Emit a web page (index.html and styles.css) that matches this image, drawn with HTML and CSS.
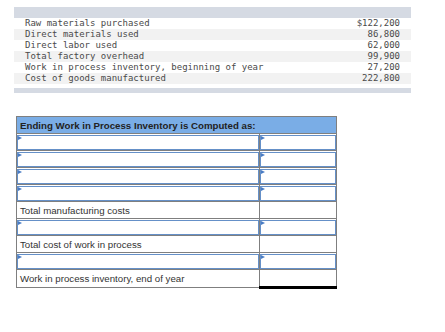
FILE: index.html
```html
<!DOCTYPE html>
<html lang="en">
<head>
    <meta charset="UTF-8">
    <title>Work in Process Inventory</title>
    <link rel="stylesheet" href="styles.css">
</head>
<body>
    <div class="given">
        <div class="given-bar"></div>
        <div class="given-row"><span>Raw materials purchased</span><span>$122,200</span></div>
        <div class="given-row"><span>Direct materials used</span><span>86,800</span></div>
        <div class="given-row"><span>Direct labor used</span><span>62,000</span></div>
        <div class="given-row"><span>Total factory overhead</span><span>99,900</span></div>
        <div class="given-row"><span>Work in process inventory, beginning of year</span><span>27,200</span></div>
        <div class="given-row"><span>Cost of goods manufactured</span><span>222,800</span></div>
        <div class="given-bar given-bar-bottom"></div>
    </div>

    <table class="worksheet">
        <colgroup>
            <col class="col-label">
            <col class="col-amount">
        </colgroup>
        <tr>
            <th colspan="2">Ending Work in Process Inventory is Computed as:</th>
        </tr>
        <tr>
            <td class="entry"><div class="field"></div></td>
            <td class="entry"><div class="field"></div></td>
        </tr>
        <tr>
            <td class="entry"><div class="field"></div></td>
            <td class="entry"><div class="field"></div></td>
        </tr>
        <tr>
            <td class="entry"><div class="field"></div></td>
            <td class="entry"><div class="field"></div></td>
        </tr>
        <tr>
            <td class="entry"><div class="field"></div></td>
            <td class="entry"><div class="field"></div></td>
        </tr>
        <tr>
            <td class="label">Total manufacturing costs</td>
            <td class="total"></td>
        </tr>
        <tr>
            <td class="entry"><div class="field"></div></td>
            <td class="entry"><div class="field"></div></td>
        </tr>
        <tr>
            <td class="label">Total cost of work in process</td>
            <td class="total"></td>
        </tr>
        <tr>
            <td class="entry"><div class="field"></div></td>
            <td class="entry"><div class="field"></div></td>
        </tr>
        <tr>
            <td class="label">Work in process inventory, end of year</td>
            <td class="total grand"></td>
        </tr>
    </table>
</body>
</html>
```

FILE: styles.css
```css
body {
    margin: 0;
    background: #ffffff;
    color: #333333;
    font-family: 'Liberation Sans', Arial, sans-serif;
}

/* given data block */
.given {
    width: 397px;
    margin: 7px 0 0 14px;
    font-family: 'DejaVu Sans Mono', 'Liberation Mono', monospace;
    font-size: 9px;
    color: #4a4a4a;
}

.given-bar {
    height: 11px;
    background: #d5dae3;
}

.given-bar-bottom {
    height: 5px;
    margin-top: 4px;
}

.given-row {
    display: flex;
    justify-content: space-between;
    height: 11px;
    line-height: 11px;
    padding: 0 11px;
}

.given-row:nth-child(odd) {
    background: #f2f2f2;
}

/* worksheet */
.worksheet {
    margin: 23px 0 0 16px;
    width: 320px;
    table-layout: fixed;
    border-collapse: collapse;
    font-size: 9.7px;
}

.col-label {
    width: 243px;
}

.col-amount {
    width: 77px;
}

.worksheet th {
    height: 16px;
    padding: 0 3px;
    background: #7aade6;
    border: 1px solid #7f7f7f;
    text-align: left;
    font-weight: bold;
    color: #222222;
}

.worksheet td {
    height: 16px;
    padding: 0;
    border: 1px solid #7f7f7f;
}

.worksheet td.label {
    padding: 0 3px;
}

.worksheet td.total {
    border-top: 1px solid #000000;
}

.worksheet td.grand {
    border-bottom: 3px solid #000000;
}

.field {
    position: relative;
    height: 13px;
    border: 1.5px solid #6590c8;
    background: #ffffff;
}

/* small blue flag in the corner of each entry */
.field::before {
    content: "";
    position: absolute;
    left: 0;
    top: 0;
    border-left: 4px solid #4a7cc4;
    border-top: 2px solid transparent;
    border-bottom: 2px solid transparent;
}
```
